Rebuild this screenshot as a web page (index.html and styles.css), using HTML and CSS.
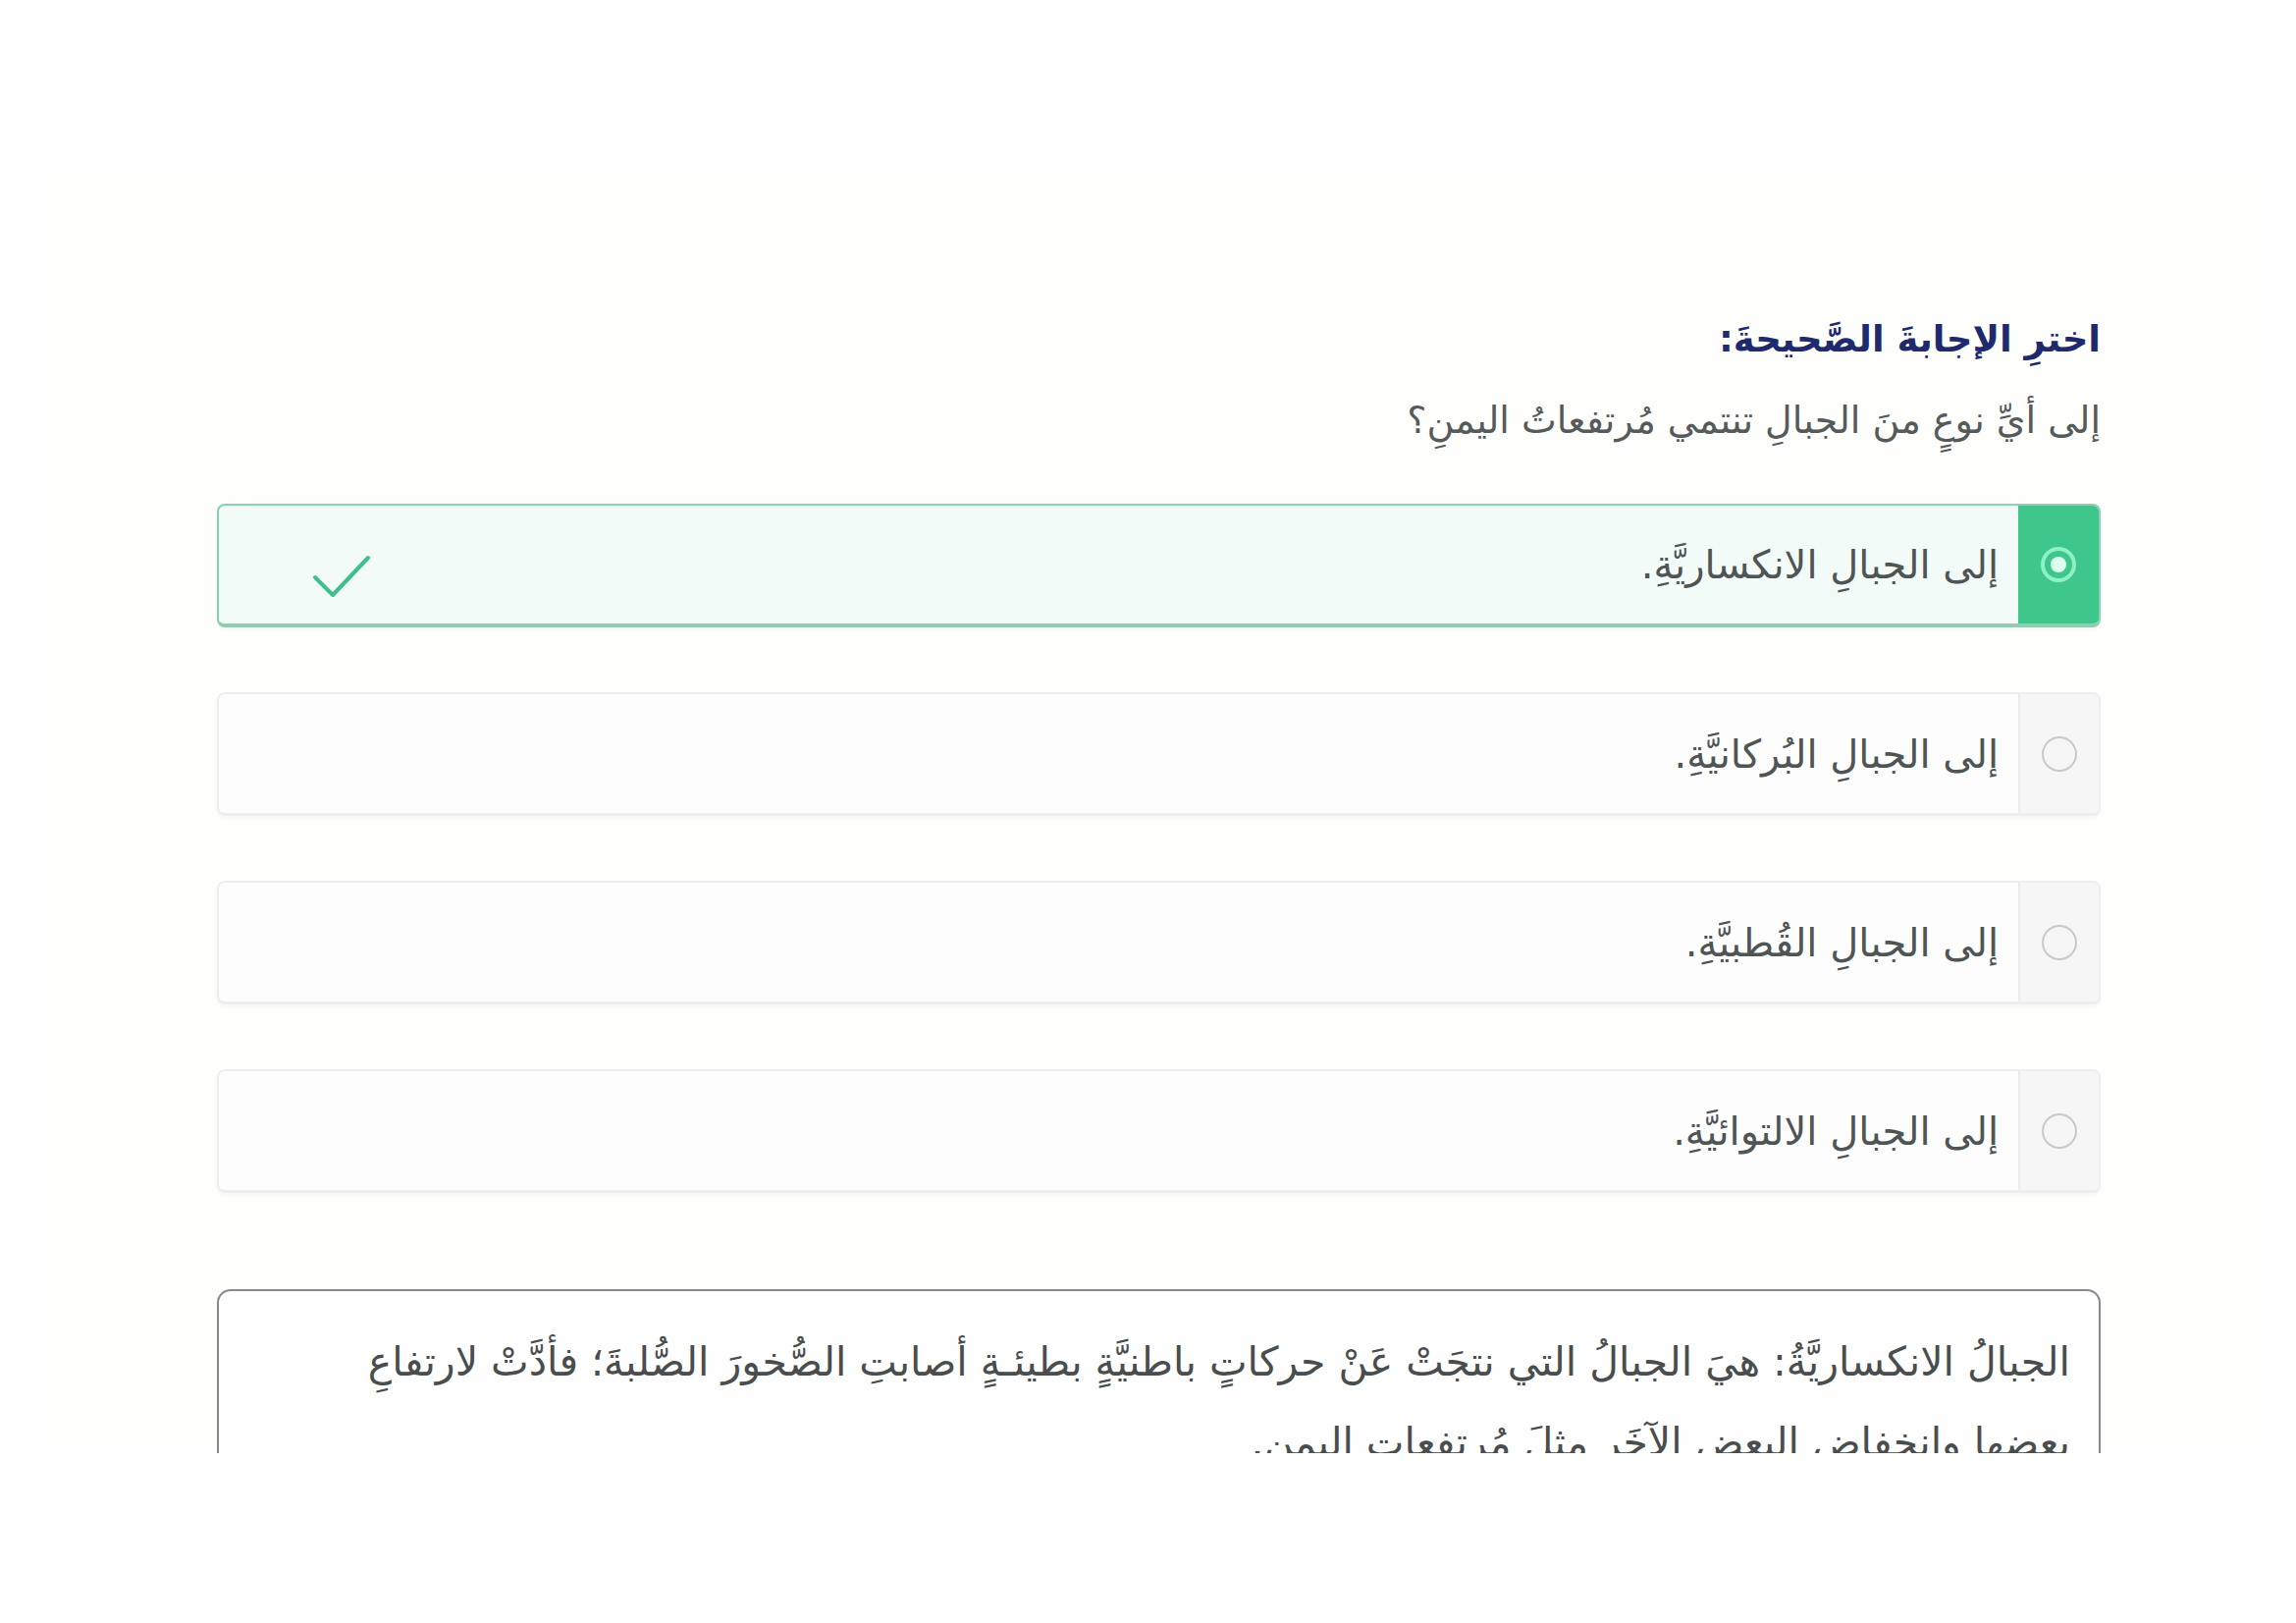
FILE: index.html
```html
<!DOCTYPE html>
<html lang="ar" dir="rtl">
<head>
<meta charset="utf-8">
<title>اختر الإجابة الصحيحة</title>
<link rel="stylesheet" href="styles.css">
</head>
<body>
<main class="panel">
  <h1 class="title">اخترِ الإجابةَ الصَّحيحةَ:</h1>
  <p class="question">إلى أيِّ نوعٍ منَ الجبالِ تنتمي مُرتفعاتُ اليمنِ؟</p>

  <ul class="options">
    <li class="option option--correct">
      <span class="radio-cell"><span class="radio radio--on"></span></span>
      <span class="label">إلى الجبالِ الانكساريَّةِ.</span>
      <svg class="check" viewBox="0 0 60 46" width="60" height="46" aria-hidden="true">
        <path d="M3 24 L21 42 L57 4" fill="none" stroke="#3fbf8c" stroke-width="4" stroke-linecap="round" stroke-linejoin="round"/>
      </svg>
    </li>
    <li class="option">
      <span class="radio-cell"><span class="radio"></span></span>
      <span class="label">إلى الجبالِ البُركانيَّةِ.</span>
    </li>
    <li class="option">
      <span class="radio-cell"><span class="radio"></span></span>
      <span class="label">إلى الجبالِ القُطبيَّةِ.</span>
    </li>
    <li class="option">
      <span class="radio-cell"><span class="radio"></span></span>
      <span class="label">إلى الجبالِ الالتوائيَّةِ.</span>
    </li>
  </ul>

  <section class="explain">
    <p>الجبالُ الانكساريَّةُ: هيَ الجبالُ التي نتجَتْ عَنْ حركاتٍ باطنيَّةٍ بطيئـةٍ أصابتِ الصُّخورَ الصُّلبةَ؛ فأدَّتْ لارتفاعِ<br>بعضِها وانخفاضِ البعضِ الآخَرِ مثلَ مُرتفعاتِ اليمنِ.</p>
  </section>
</main>
</body>
</html>
```

FILE: styles.css
```css
* { box-sizing: border-box; }

html, body {
  margin: 0;
  background: #ffffff;
}

body {
  font-family: "DejaVu Sans", "Noto Sans", sans-serif;
  height: 1653px;
  overflow: hidden;
}

.panel {
  display: block;
  margin: 173px 42px 0 42px;
  height: 1307px;
  overflow: hidden;
  background: #fefefc;
  padding: 143px 157px 0 179px;
  direction: rtl;
}

.title {
  margin: 0;
  font-size: 37px;
  line-height: 60px;
  font-weight: bold;
  color: #1f2a6e;
}

.question {
  margin: 22px 0 0 0;
  font-size: 38px;
  line-height: 60px;
  color: #555a5a;
}

.options {
  list-style: none;
  margin: 55px 0 0 0;
  padding: 0;
  display: flex;
  flex-direction: column;
  gap: 66px;
}

.option {
  display: flex;
  align-items: stretch;
  height: 126px;
  border: 2px solid #eeeeee;
  border-bottom-width: 3px;
  border-radius: 8px;
  background: #fdfdfd;
  box-shadow: 0 3px 4px rgba(0, 0, 0, 0.03);
  overflow: hidden;
}

.radio-cell {
  flex: 0 0 82px;
  display: flex;
  align-items: center;
  justify-content: center;
  background: #f6f6f6;
  border-left: 2px solid #ececec;
}

.radio {
  width: 36px;
  height: 36px;
  border-radius: 50%;
  border: 2px solid #c9c9c9;
  background: transparent;
}

.label {
  flex: 1;
  display: flex;
  align-items: center;
  padding-right: 20px;
  font-size: 40px;
  color: #4f5454;
}

.option--correct {
  border: 2px solid #86d2b1;
  border-bottom: 4px solid #93ccb3;
  background: #f2fbf7;
}

.option--correct .radio-cell {
  background: #3ec68b;
  border-left: none;
}

.radio--on {
  border: 4px solid #8ef0c6;
  display: flex;
  align-items: center;
  justify-content: center;
}

.radio--on::after {
  content: "";
  width: 16px;
  height: 16px;
  border-radius: 50%;
  background: #dcfff0;
}

.check {
  align-self: center;
  margin: 24px 0 0 95px;
  flex: 0 0 auto;
}

.explain {
  margin-top: 98px;
  border: 2px solid #8a8a8a;
  border-radius: 14px;
  background: #fefefe;
  padding: 31px 29px 40px 29px;
}

.explain p {
  margin: 0;
  font-size: 41px;
  line-height: 82px;
  color: #4a4d4d;
  white-space: nowrap;
}
```
